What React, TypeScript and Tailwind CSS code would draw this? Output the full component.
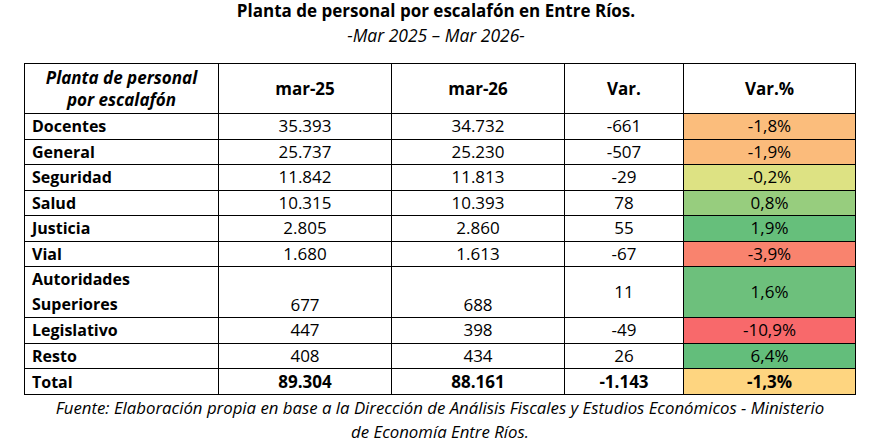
const rows = [
  { name: "Docentes", a: "35.393", b: "34.732", v: "-661", p: "-1,8%", bg: "bg-[#fbbd7c]" },
  { name: "General", a: "25.737", b: "25.230", v: "-507", p: "-1,9%", bg: "bg-[#fbbb7b]" },
  { name: "Seguridad", a: "11.842", b: "11.813", v: "-29", p: "-0,2%", bg: "bg-[#dde283]" },
  { name: "Salud", a: "10.315", b: "10.393", v: "78", p: "0,8%", bg: "bg-[#97cd7e]" },
  { name: "Justicia", a: "2.805", b: "2.860", v: "55", p: "1,9%", bg: "bg-[#66bf7b]" },
  { name: "Vial", a: "1.680", b: "1.613", v: "-67", p: "-3,9%", bg: "bg-[#f9836e]" },
];

const tail = [
  { name: "Legislativo", a: "447", b: "398", v: "-49", p: "-10,9%", bg: "bg-[#f8696b]" },
  { name: "Resto", a: "408", b: "434", v: "26", p: "6,4%", bg: "bg-[#63be7b]" },
];

const cell = "border border-black text-center px-1";

function Row({ r, h }: { r: (typeof rows)[number]; h: string }) {
  return (
    <tr className={h}>
      <td className="border border-black pl-[7px] font-bold text-left text-[16px]">{r.name}</td>
      <td className={cell}>{r.a}</td>
      <td className={cell}>{r.b}</td>
      <td className={cell}>{r.v}</td>
      <td className={`${cell} ${r.bg}`}>{r.p}</td>
    </tr>
  );
}

export default function App() {
  return (
    <div
      className="w-[872px] h-[442px] bg-white text-black overflow-hidden"
      style={{ fontFamily: "'Open Sans', Lato, sans-serif" }}
    >
      <div className="text-center font-bold text-[17px] leading-[22px]">
        Planta de personal por escalafón en Entre Ríos.
      </div>
      <div className="text-center italic text-[17.5px] leading-[24px] mt-[1px]">
        -Mar 2025 – Mar 2026-
      </div>

      <table className="ml-[24px] mt-[16px] border-collapse border-[1.5px] border-black text-[17px] leading-[20px] table-fixed w-[831px]">
        <colgroup>
          <col className="w-[194px]" />
          <col className="w-[173px]" />
          <col className="w-[173px]" />
          <col className="w-[119px]" />
          <col className="w-[172px]" />
        </colgroup>
        <thead>
          <tr className="h-[50px]">
            <th className="border border-black italic font-bold text-center leading-[22px]">
              Planta de personal
              <br />
              por escalafón
            </th>
            <th className={`${cell} font-bold`}>mar-25</th>
            <th className={`${cell} font-bold`}>mar-26</th>
            <th className={`${cell} font-bold`}>Var.</th>
            <th className={`${cell} font-bold`}>Var.%</th>
          </tr>
        </thead>
        <tbody>
          {rows.map((r) => (
            <Row key={r.name} r={r} h="h-[25.5px]" />
          ))}
          <tr className="h-[50px]">
            <td className="border border-black pl-[7px] font-bold text-left text-[16px] leading-[25px]">
              Autoridades
              <br />
              Superiores
            </td>
            <td className={`${cell} align-bottom pb-[2px]`}>677</td>
            <td className={`${cell} align-bottom pb-[2px]`}>688</td>
            <td className={cell}>11</td>
            <td className={`${cell} bg-[#6dc07c]`}>1,6%</td>
          </tr>
          {tail.map((r) => (
            <Row key={r.name} r={r} h="h-[25.5px]" />
          ))}
          <tr className="h-[26px] font-bold">
            <td className="border border-black pl-[7px] text-left text-[16px]">Total</td>
            <td className={cell}>89.304</td>
            <td className={cell}>88.161</td>
            <td className={cell}>-1.143</td>
            <td className={`${cell} bg-[#fed580]`}>-1,3%</td>
          </tr>
        </tbody>
      </table>

      <div className="text-center italic text-[16.8px] leading-[24px] mt-[1px] pl-[8px]">
        Fuente: Elaboración propia en base a la Dirección de Análisis Fiscales y Estudios Económicos - Ministerio
        <br />
        de Economía Entre Ríos.
      </div>
    </div>
  );
}
